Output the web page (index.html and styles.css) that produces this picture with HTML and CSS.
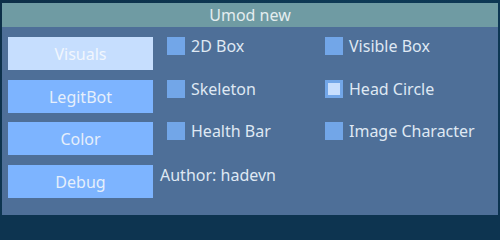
FILE: index.html
```html
<!DOCTYPE html>
<html>
<head>
<meta charset="utf-8">
<link rel="stylesheet" href="styles.css">
</head>
<body>
<div class="window">
  <div class="titlebar">Umod new</div>
  <div class="content">
    <div class="tabs">
      <div class="tab active">Visuals</div>
      <div class="tab">LegitBot</div>
      <div class="tab">Color</div>
      <div class="tab">Debug</div>
    </div>
    <div class="options">
      <div class="opt"><span class="box"></span><span>2D Box</span></div>
      <div class="opt"><span class="box"></span><span>Visible Box</span></div>
      <div class="opt"><span class="box"></span><span>Skeleton</span></div>
      <div class="opt"><span class="box checked"></span><span>Head Circle</span></div>
      <div class="opt"><span class="box"></span><span>Health Bar</span></div>
      <div class="opt"><span class="box"></span><span>Image Character</span></div>
      <div class="author">Author: hadevn</div>
    </div>
  </div>
</div>
</body>
</html>
```
FILE: styles.css
```css
html {
  background: #0d3450;
}
html, body {
  margin: 0;
  padding: 0;
  overflow: hidden;
}
body {
  width: 500px;
  height: 215px;
  background: linear-gradient(135deg, #0d2f48 0%, #0e3a56 50%, #0b3350 100%);
  font-family: "Noto Sans", "Open Sans", sans-serif;
  font-size: 16px;
}
.window {
  margin: 3px 2px 0 2px;
  height: 212px;
  background: #4e6f98;
}
.titlebar {
  height: 24px;
  background: #6f9ba3;
  color: #e4edef;
  text-align: center;
  line-height: 24px;
}
.content {
  display: flex;
  padding: 10px 0 0 6px;
  gap: 14px;
}
.tabs {
  width: 145px;
  display: flex;
  flex-direction: column;
  gap: 9.5px;
}
.tab {
  height: 33px;
  line-height: 34px;
  background: #7db4ff;
  color: #e6effb;
  text-align: center;
}
.tab.active {
  background: #c6defe;
  color: #f1f6fd;
}
.options {
  display: grid;
  grid-template-columns: 158px 150px;
  grid-auto-rows: 33px;
  row-gap: 9.5px;
  align-content: start;
}
.opt {
  display: flex;
  align-items: flex-start;
  gap: 6px;
  color: #dfe8f3;
  line-height: 19px;
}
.box {
  width: 18px;
  height: 18px;
  background: #72a6e8;
  flex: none;
  box-sizing: border-box;
}
.box.checked {
  border: 3px solid #72a6e8;
  background: #c8defd;
}
.author {
  grid-column: 1 / 3;
  color: #dfe8f3;
  line-height: 20px;
  margin-left: -7px;
}
```
